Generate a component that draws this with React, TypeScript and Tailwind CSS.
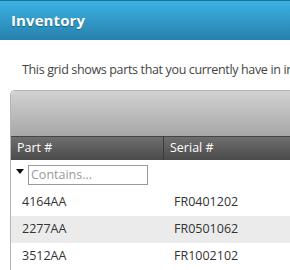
import React from 'react';

const rows = [
  { part: '4164AA', serial: 'FR0401202' },
  { part: '2277AA', serial: 'FR0501062' },
  { part: '3512AA', serial: 'FR1002102' },
];

export default function App() {
  return (
    <div className="w-[290px] h-[270px] overflow-hidden bg-white" style={{ fontFamily: '"Open Sans", "DejaVu Sans", sans-serif' }}>
      {/* Title bar */}
      <div className="h-[40px] border-t border-[#1f6f98] bg-gradient-to-b from-[#3cb2e3] to-[#2781ad] flex items-center pl-[11px]">
        <h1 className="text-white font-bold text-[15px] tracking-[0.1px]" style={{ textShadow: '0 1px 1px rgba(0,0,0,0.35)' }}>Inventory</h1>
      </div>

      <p className="pl-[22px] pt-[21px] h-[50px] text-[12.5px] tracking-[-0.35px] text-[#444] whitespace-nowrap">
        This grid shows parts that you currently have in inventory.
      </p>

      {/* Grid */}
      <div className="ml-[10px] border-l border-t border-[#b5b5b5] rounded-tl-[5px] overflow-hidden">
        <div className="h-[45px] bg-gradient-to-b from-[#d2d2d2] to-[#a7a7a7]" />
        <div className="grid grid-cols-[153px_1fr] h-[24px] bg-gradient-to-b from-[#6e6e6e] to-[#4b4b4b] border-t border-[#444] text-[12.5px] text-white">
          <div className="flex items-center pl-[6px] border-r border-[#3a3a3a]">Part #</div>
          <div className="flex items-center pl-[6px]">Serial #</div>
        </div>
        <div className="h-[29px] flex items-center pl-[5px] gap-[4px]">
          <span className="w-0 h-0 border-l-[4px] border-r-[4px] border-t-[5px] border-l-transparent border-r-transparent border-t-[#111] mb-[6px]" />
          <input
            readOnly
            placeholder="Contains..."
            className="w-[120px] h-[20px] border border-[#9a9a9a] px-[2px] text-[12.5px] text-[#333] placeholder:text-[#999] outline-none"
          />
        </div>
        {rows.map((r, i) => (
          <div key={r.part} className={`grid grid-cols-[153px_1fr] h-[27px] items-center text-[12.5px] text-[#333] ${i % 2 === 1 ? 'bg-[#ebebeb]' : 'bg-white'}`}>
            <div className="pl-[11px]">{r.part}</div>
            <div className="pl-[10px]">{r.serial}</div>
          </div>
        ))}
      </div>
    </div>
  );
}
